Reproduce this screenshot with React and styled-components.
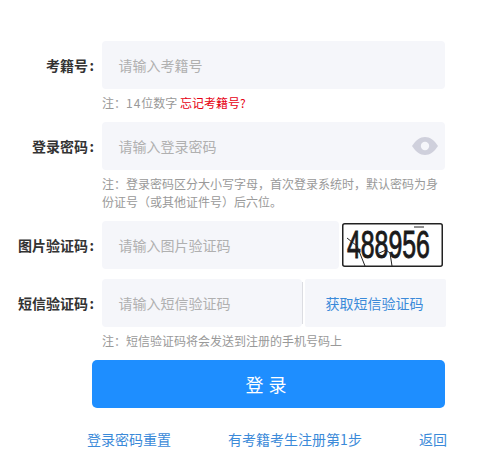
import React from "react";
import styled, { createGlobalStyle } from "styled-components";

const Global = createGlobalStyle`
  html, body { margin: 0; padding: 0; background: #fff; }
  body { font-family: "Noto Sans CJK SC", "Liberation Sans", sans-serif; }
`;
const Page = styled.div`
  width: 483px; height: 473px; box-sizing: border-box; padding: 41px 0 0 0; overflow: hidden;
`;
const Row = styled.div`
  display: flex; align-items: center; height: 48px; margin-top: ${p => p.$gap || 0}px;
`;
const Label = styled.label`
  width: 94px; flex: none; display: flex; justify-content: flex-end; font-size: 14px; font-weight: 700; color: #333;
  white-space: nowrap; margin-right: 8px;
`;
const Colon = styled.span`
  width: 6px; text-align: right;
`;
const InputBox = styled.div`
  width: ${p => p.$w}px; height: 48px; flex: none; box-sizing: border-box; background: #f5f6fa;
  border-radius: 4px; display: flex; align-items: center; justify-content: space-between;
  padding: 0 7px 0 16.5px; font-size: 14px; color: #b0b0b0;
`;
const Note = styled.div`
  margin-left: 102px; width: 343px; padding: 5px 0 10px; font-size: 12px; line-height: 18px; color: #999;
`;
const Digits = styled.span` letter-spacing: 1px; `;
const Forgot = styled.a` color: #e60012; `;
const Captcha = styled.svg`
  flex: none; width: 101px; height: 44px; margin-left: 3px; display: block;
`;
const Divider = styled.div`
  width: 1px; height: 42px; background: #dcdde2; margin: 0 1px 0 0; flex: none;
`;
const SmsButton = styled.div`
  width: 141px; height: 48px; flex: none; box-sizing: border-box; padding-right: 2px; background: #f5f6fa;
  border-radius: 2px; display: flex; align-items: center; justify-content: center; font-size: 14px;
  color: #3b8ad9; margin-left: 1px;
`;
const Submit = styled.button`
  display: block; margin-left: 92px; width: 353px; height: 48px; border: 0; border-radius: 5px;
  background: #1e8eff; color: #fff; font-family: inherit; font-size: 18px; letter-spacing: 5px; padding: 0;
`;
const Links = styled.div`
  display: flex; justify-content: space-between; margin: 21px 0 0 87px; width: 360px;
  font-size: 14px; line-height: 20px; color: #3b8ad9;
`;

const Lab = ({ children }) => <Label>{children}<Colon>:</Colon></Label>;

export default function App() {
  return (
    <Page>
      <Global />
      <Row>
        <Lab>考籍号</Lab>
        <InputBox $w={343}>请输入考籍号</InputBox>
      </Row>
      <Note>注：<Digits>14</Digits>位数字 <Forgot>忘记考籍号?</Forgot></Note>
      <Row>
        <Lab>登录密码</Lab>
        <InputBox $w={343}>
          请输入登录密码
          <svg width="26" height="18" viewBox="0 0 26 18">
            <path d="M0 9C4 3 8 0 13 0s9 3 13 9c-4 6-8 9-13 9S4 15 0 9z" fill="#cfd0dc" />
            <circle cx="13" cy="9" r="4.2" fill="#f5f6fa" />
          </svg>
        </InputBox>
      </Row>
      <Note>注：登录密码区分大小写字母，首次登录系统时，默认密码为身份证号（或其他证件号）后六位。</Note>
      <Row>
        <Lab>图片验证码</Lab>
        <InputBox $w={237}>请输入图片验证码</InputBox>
        <Captcha viewBox="0 0 101 44">
          <rect x="0.75" y="0.75" width="99.5" height="42.5" rx="2" fill="#fff" stroke="#222" strokeWidth="1.5" />
          <text transform="translate(5 35) scale(1.08 1.65)" fontFamily="'Liberation Sans', sans-serif" fontSize="23" stroke="#1a1a1a" strokeWidth="0.55" fill="#1a1a1a">488956</text>
          <path d="M5 15l10 8 8 20M35 31l9-4 4 3 2 13M72 4h10" fill="none" stroke="#222" strokeWidth="1" />
        </Captcha>
      </Row>
      <Row $gap={10}>
        <Lab>短信验证码</Lab>
        <InputBox $w={200}>请输入短信验证码</InputBox>
        <Divider />
        <SmsButton>获取短信验证码</SmsButton>
      </Row>
      <Note>注：短信验证码将会发送到注册的手机号码上</Note>
      <Submit>登录</Submit>
      <Links>
        <span>登录密码重置</span>
        <span>有考籍考生注册第1步</span>
        <span>返回</span>
      </Links>
    </Page>
  );
}
